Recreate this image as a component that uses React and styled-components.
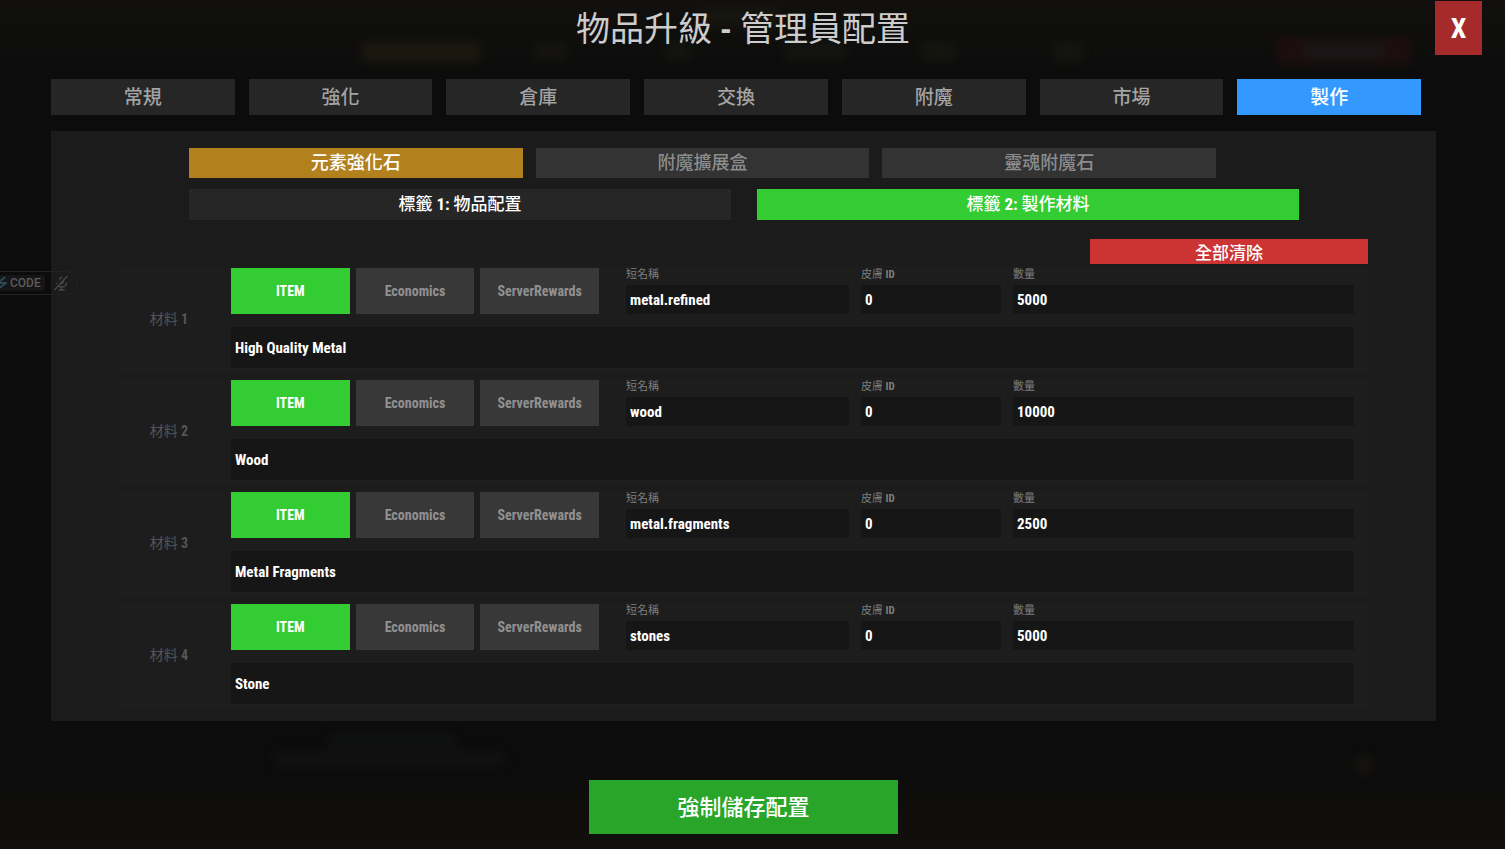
import { useState } from 'react';
import styled, { createGlobalStyle } from 'styled-components';

const tabs = ['常規', '強化', '倉庫', '交換', '附魔', '市場', '製作'];
const categories = ['元素強化石', '附魔擴展盒', '靈魂附魔石'];
const steps = [
  { id: 1, title: '物品配置' },
  { id: 2, title: '製作材料' },
];
const types = ['ITEM', 'Economics', 'ServerRewards'];
const materials = [
  { id: 1, shortname: 'metal.refined', skin: '0', amount: '5000', name: 'High Quality Metal' },
  { id: 2, shortname: 'wood', skin: '0', amount: '10000', name: 'Wood' },
  { id: 3, shortname: 'metal.fragments', skin: '0', amount: '2500', name: 'Metal Fragments' },
  { id: 4, shortname: 'stones', skin: '0', amount: '5000', name: 'Stone' },
];

const Material = ({ item }) => {
  const [type, setType] = useState('ITEM');
  const key = `material-${item.id}`;

  return (
    <Row>
      <RowTitle>
        材料 <b>{item.id}</b>
      </RowTitle>
      <RowBody>
        <RowTop>
          <Types>
            {types.map((t) => (
              <TypeButton key={t} $active={t === type} onClick={() => setType(t)}>
                {t}
              </TypeButton>
            ))}
          </Types>
          <Fields>
            <Field>
              <label htmlFor={`${key}-shortname`}>短名稱</label>
              <Input id={`${key}-shortname`} defaultValue={item.shortname} />
            </Field>
            <Field>
              <label htmlFor={`${key}-skin`}>
                皮膚 <b>ID</b>
              </label>
              <Input id={`${key}-skin`} defaultValue={item.skin} />
            </Field>
            <Field>
              <label htmlFor={`${key}-amount`}>數量</label>
              <Input id={`${key}-amount`} defaultValue={item.amount} />
            </Field>
          </Fields>
        </RowTop>
        <NameInput aria-label={`材料 ${item.id}`} defaultValue={item.name} />
      </RowBody>
    </Row>
  );
};

const App = () => {
  const [tab, setTab] = useState('製作');
  const [category, setCategory] = useState('元素強化石');
  const [step, setStep] = useState(2);

  return (
    <Page>
      <GlobalStyle />
      <Backdrop viewBox="0 0 1505 849" preserveAspectRatio="none" aria-hidden="true">
        <filter id="soft" x="-20%" y="-50%" width="140%" height="200%" colorInterpolationFilters="sRGB">
          <feGaussianBlur stdDeviation="5" />
        </filter>
        <g filter="url(#soft)">
          <rect x="362" y="42" width="118" height="20" fill="#1c1810" />
          <rect x="535" y="42" width="32" height="18" fill="#151410" />
          <rect x="665" y="42" width="26" height="18" fill="#141410" />
          <rect x="700" y="6" width="80" height="22" fill="#161510" />
          <rect x="785" y="42" width="60" height="18" fill="#141410" />
          <rect x="922" y="42" width="34" height="18" fill="#151510" />
          <rect x="1054" y="42" width="28" height="20" fill="#151510" />
          <rect x="1277" y="38" width="134" height="26" fill="#1c0e0e" />
          <rect x="1305" y="42" width="78" height="18" fill="#1a1516" />
          <rect x="330" y="734" width="125" height="16" fill="#101211" />
          <rect x="275" y="752" width="230" height="14" fill="#101110" />
          <rect x="1357" y="756" width="14" height="18" fill="#18150f" />
        </g>
      </Backdrop>
      <Header>
        <Title>
          物品升級 <b>-</b> 管理員配置
        </Title>
        <CloseButton>X</CloseButton>
      </Header>
      <Main>
        <Tabs>
          {tabs.map((t) => (
            <TabButton key={t} $active={t === tab} onClick={() => setTab(t)}>
              {t}
            </TabButton>
          ))}
        </Tabs>
        <Panel>
          <Categories>
            {categories.map((c) => (
              <CategoryButton key={c} $active={c === category} onClick={() => setCategory(c)}>
                {c}
              </CategoryButton>
            ))}
          </Categories>
          <Steps>
            {steps.map((s) => (
              <StepButton key={s.id} $active={s.id === step} onClick={() => setStep(s.id)}>
                標籤 <b>{s.id}:</b> {s.title}
              </StepButton>
            ))}
          </Steps>
          <List>
            <ClearButton>全部清除</ClearButton>
            <Rows>
              {materials.map((item) => (
                <Material key={item.id} item={item} />
              ))}
            </Rows>
          </List>
        </Panel>
        <SaveButton>強制儲存配置</SaveButton>
      </Main>
      <Voice>
        <Code>
          <svg width="14" height="16" viewBox="0 0 14 16" fill="none" stroke="#2b4a55" strokeWidth="2">
            <path d="M12 2L5 8h8L5 14" />
          </svg>
          CODE
        </Code>
        <svg width="16" height="16" viewBox="0 0 16 16" fill="none" stroke="#4a4a4a" strokeWidth="1.3">
          <rect x="6" y="1.5" width="5" height="8" rx="2.5" fill="#3c3c3c" stroke="none" />
          <path d="M3.5 7.5c0 3 2 4.5 5 4.5s5-1.5 5-4.5M8.5 12v3M5.5 15h6" />
          <path d="M0.500 14L13 0" stroke="#1b1b1b" strokeWidth="2" />
          <path d="M1.500 15L14.500 1" />
        </svg>
      </Voice>
    </Page>
  );
};

const GlobalStyle = createGlobalStyle`
  * {
    box-sizing: border-box;
  }

  body {
    margin: 0;
    background: #0c0c0c;
  }

  body, button, input {
    font-family: 'Roboto Condensed', 'Liberation Sans Narrow', 'Noto Sans CJK TC', sans-serif;
  }

  button {
    padding: 0;
    border: 0;
    cursor: pointer;
  }
`;

const Page = styled.div`
  position: relative;
  min-height: 100vh;
  overflow: hidden;
  background: linear-gradient(#11100e, #0c0c0c 80px, #0c0c0c calc(100% - 80px), #110f0c);
`;

const Backdrop = styled.svg`
  position: absolute;
  inset: 0;
  width: 100%;
  height: 100%;
`;

const Header = styled.header`
  position: relative;
  display: grid;
  grid-template-columns: 1fr auto 1fr;
  align-items: center;
  padding: 1px 23px 24px 4px;
`;

const Title = styled.h1`
  grid-column: 2;
  margin: 0;
  padding-top: 2px;
  font-size: 34px;
  font-weight: 400;
  line-height: 52px;
  color: #cccccc;
`;

const CloseButton = styled.button`
  justify-self: end;
  width: 47px;
  height: 54px;
  background: #a52a2a;
  color: #ffffff;
  font-size: 28px;
  font-weight: 700;
`;

const Main = styled.main`
  position: relative;
  display: flex;
  flex-direction: column;
  padding: 0 69px 15px 51px;
`;

const Tabs = styled.nav`
  display: grid;
  grid-template-columns: repeat(7, 1fr);
  gap: 14px;
  margin: 0 15px 16px 0;
`;

const TextButton = styled.button`
  padding-bottom: 4px;
  color: #ffffff;
  font-weight: 500;
`;

const TabButton = styled(TextButton)`
  height: 36px;
  background: ${(props) => (props.$active ? '#3399ff' : '#262626')};
  color: ${(props) => (props.$active ? '#ffffff' : '#a3a3a3')};
  font-size: 19px;
`;

const Panel = styled.section`
  padding: 17px 68px 12px 69px;
  background: #1b1b1b;
`;

const Categories = styled.div`
  display: grid;
  grid-template-columns: repeat(3, 1fr);
  gap: 13px;
  margin: 0 152px 11px 69px;
`;

const CategoryButton = styled(TextButton)`
  height: 30px;
  background: ${(props) => (props.$active ? '#b3801e' : '#333333')};
  color: ${(props) => (props.$active ? '#ffffff' : '#8c8c8c')};
  font-size: 18px;
`;

const Steps = styled.div`
  display: grid;
  grid-template-columns: repeat(2, 1fr);
  gap: 26px;
  margin: 0 69px 19px;
`;

const StepButton = styled(TextButton)`
  height: 31px;
  background: ${(props) => (props.$active ? '#33cc33' : '#262626')};
  font-size: 17px;
`;

const List = styled.div`
  display: flex;
  flex-direction: column;
  gap: 2px;
`;

const ClearButton = styled(TextButton)`
  align-self: flex-end;
  width: 278px;
  height: 25px;
  background: #cc3333;
  font-size: 17px;
`;

const Rows = styled.div`
  display: flex;
  flex-direction: column;
  gap: 5px;
`;

const Row = styled.div`
  display: grid;
  grid-template-columns: 111px 1fr;
  padding: 2px 14px 5px 0;
  background: #1d1d1d;
`;

const RowTitle = styled.div`
  align-self: center;
  padding-right: 13px;
  text-align: center;
  font-size: 14px;
  color: #555555;
`;

const RowBody = styled.div`
  display: flex;
  flex-direction: column;
  gap: 13px;
`;

const RowTop = styled.div`
  display: grid;
  grid-template-columns: 368fr 728fr;
  gap: 27px;
`;

const Types = styled.div`
  display: grid;
  grid-template-columns: repeat(3, 1fr);
  gap: 6px;
`;

const TypeButton = styled.button`
  background: ${(props) => (props.$active ? '#33cc33' : '#383838')};
  color: ${(props) => (props.$active ? '#ffffff' : '#919191')};
  font-size: 14px;
  font-weight: 700;
`;

const Fields = styled.div`
  display: grid;
  grid-template-columns: 223fr 140fr 341fr;
  gap: 12px;
`;

const Field = styled.div`
  display: flex;
  flex-direction: column;
  gap: 3px;
  min-width: 0;

  label {
    font-size: 11px;
    line-height: 14px;
    color: #7d7d7d;
  }
`;

const Input = styled.input`
  width: 100%;
  height: 29px;
  padding: 0 4px;
  border: 0;
  outline: none;
  background: #161616;
  color: #ffffff;
  font-size: 15px;
  font-weight: 700;
`;

const NameInput = styled(Input)`
  height: 41px;
`;

const SaveButton = styled(TextButton)`
  align-self: center;
  width: 309px;
  height: 54px;
  margin-top: 59px;
  background: #29a629;
  font-size: 22px;
`;

/* voice overlay docked to the left edge of the screen */
const Voice = styled.div`
  position: absolute;
  top: 271px;
  left: -19px;
  display: flex;
  align-items: center;
  gap: 8px;
  height: 24px;
  padding: 0 8px 0 4px;
  border: 1px solid #222222;
  border-left: 0;
  border-radius: 12px;
`;

const Code = styled.span`
  display: flex;
  align-items: center;
  gap: 3px;
  padding: 0 4px 0 8px;
  border-radius: 3px;
  background: #161616;
  color: #5c5c5c;
  font-family: Roboto, sans-serif;
  font-size: 12px;
  font-weight: 500;
  line-height: 16px;
`;

export default App;
